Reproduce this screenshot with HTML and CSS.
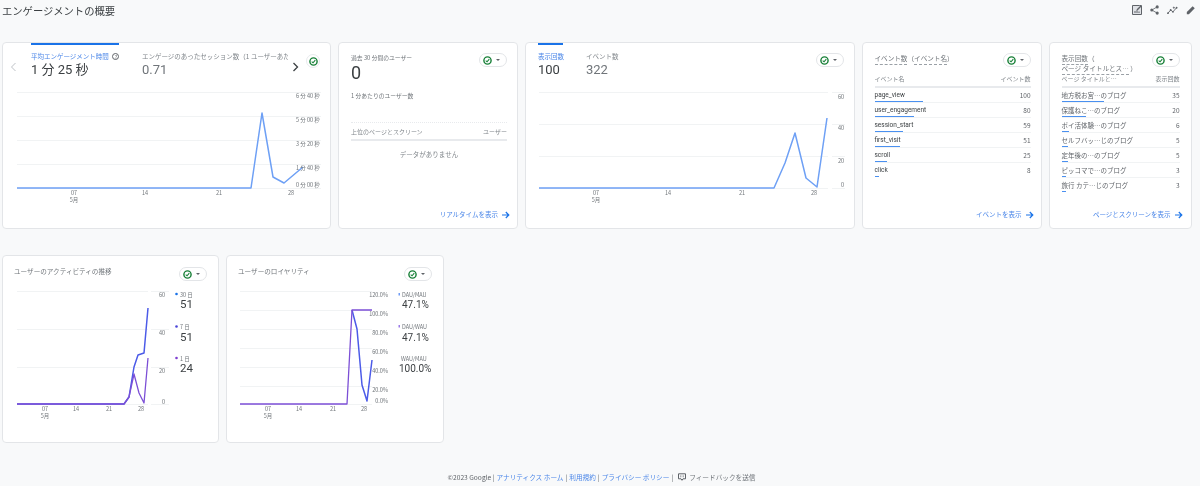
FILE: index.html
```html
<!DOCTYPE html>
<html lang="ja">
<head>
<meta charset="utf-8">
<title>エンゲージメントの概要</title>
<link rel="stylesheet" href="styles.css">
</head>
<body>
<header class="top">
  <h1 class="page-title">エンゲージメントの概要</h1>
  <div class="top-icons">
    <svg width="10" height="10" viewBox="0 0 10 10"><path d="M.5.500h7l2 0v9h-9z" fill="#dfe1e5" stroke="#5f6368"/><path d="M2.500 8V6h1v2zM4.500 8V4.500h1V8zM6.500 8V6.500h1V8z" fill="#5f6368"/><path d="M5 4l3.500-3.500 1 1L6 5H5z" fill="#5f6368"/></svg>
    <svg width="9" height="10" viewBox="0 0 11 12"><circle cx="8.800" cy="2.200" r="1.900" fill="#5f6368"/><circle cx="2.200" cy="6" r="1.900" fill="#5f6368"/><circle cx="8.800" cy="9.800" r="1.900" fill="#5f6368"/><path d="M8.800 2.200 2.200 6l6.600 3.800" fill="none" stroke="#5f6368"/></svg>
    <svg width="11" height="10" viewBox="0 0 12 11"><path d="M1 9l3-3.500 2.500 2L10.500 3" fill="none" stroke="#5f6368"/><circle cx="1" cy="9" r="1" fill="#5f6368"/><circle cx="4" cy="5.500" r="1" fill="#5f6368"/><circle cx="6.500" cy="7.500" r="1" fill="#5f6368"/><circle cx="10.500" cy="3" r="1" fill="#5f6368"/><path d="M7 2.500l.5-1 .5 1 1 .5-1 .5-.5 1-.5-1-1-.5z" fill="#5f6368"/></svg>
    <svg width="10" height="10" viewBox="0 0 12 12"><path d="M1 11V8.500L8 1.500 10.500 4 3.500 11z" fill="#5f6368"/></svg>
  </div>
</header>

<section class="row row-one">
  <article class="card card-first card-tabs">
    <div class="tab-bar">
      <svg class="chev chev-left" width="7" height="10" viewBox="0 0 7 10"><path d="M5.500 1 1.500 5l4 4" fill="none" stroke="#bdc1c6"/></svg>
      <div class="tab tab-active tab-time">
        <div class="tab-label">平均エンゲージメント時間 <span class="help">?</span></div>
        <div class="tab-value">1 分 25 秒</div>
      </div>
      <div class="tab tab-session">
        <div class="tab-label tab-clip">エンゲージのあったセッション数（1 ユーザーあたり）</div>
        <div class="tab-value tab-value-dim">0.71</div>
      </div>
      <svg class="chev" width="7" height="10" viewBox="0 0 7 10"><path d="M1.500 1l4 4-4 4" fill="none" stroke="#3c4043" stroke-width="1.300"/></svg>
      <span class="round-check">
        <svg width="10" height="10" viewBox="0 0 10 10"><circle cx="5" cy="5" r="4" fill="none" stroke="#188038" stroke-width="1.600"/><path d="M3 5.200l1.500 1.300L7 3.500" fill="none" stroke="#188038" stroke-width="1.200"/></svg>
      </span>
    </div>
    <svg class="chart" width="329" height="120" viewBox="2 88 329 120">
      <g class="grid"><path d="M16 92.500H320M16 116.500H320M16 140.500H320M16 164.500H320M16 188.500H320"/></g>
      <path class="line line-blue" d="M16 188H250L261 113 272 177 283 183 302 167"/>
      <g class="axis">
        <text x="295" y="98">6 分 40 秒</text><text x="295" y="122">5 分 00 秒</text><text x="295" y="146">3 分 20 秒</text><text x="295" y="170">1 分 40 秒</text><text x="295" y="187">0 分 00 秒</text>
        <text x="73" y="195" text-anchor="middle">07</text><text x="73" y="202" text-anchor="middle">5月</text><text x="144" y="195" text-anchor="middle">14</text><text x="218" y="195" text-anchor="middle">21</text><text x="290" y="195" text-anchor="middle">28</text>
      </g>
    </svg>
  </article>

  <article class="card card-narrow card-pad">
    <div class="card-head">
      <div>
        <div class="mini-label">過去 30 分間のユーザー</div>
        <div class="big-zero">0</div>
      </div>
      <span class="pill"><svg class="pill-icon" width="10" height="10" viewBox="0 0 10 10"><circle cx="5" cy="5" r="4" fill="none" stroke="#188038" stroke-width="1.600"/><path d="M3 5.200l1.500 1.300L7 3.500" fill="none" stroke="#188038" stroke-width="1.200"/></svg><span class="caret"></span></span>
    </div>
    <div class="mini-label per-minute">1 分あたりのユーザー数</div>
    <div class="dots"></div>
    <div class="table-head rt-head"><span>上位のページとスクリーン</span><span>ユーザー</span></div>
    <div class="no-data">データがありません</div>
    <a class="more" href="#">リアルタイムを表示<svg class="arrow" width="8" height="8" viewBox="0 0 8 8"><path d="M0 4h6.500M3.800 1l3 3-3 3" fill="none" stroke="#1a73e8" stroke-width="1.200"/></svg></a>
  </article>

  <article class="card card-wide card-tabs">
    <div class="tab-bar tab-bar-views">
      <div class="tab tab-active tab-views">
        <div class="tab-label">表示回数</div>
        <div class="tab-value tab-num">100</div>
      </div>
      <div class="tab tab-events">
        <div class="tab-label">イベント数</div>
        <div class="tab-value tab-num tab-value-dim">322</div>
      </div>
      <span class="pill pill-end"><svg class="pill-icon" width="10" height="10" viewBox="0 0 10 10"><circle cx="5" cy="5" r="4" fill="none" stroke="#188038" stroke-width="1.600"/><path d="M3 5.200l1.500 1.300L7 3.500" fill="none" stroke="#188038" stroke-width="1.200"/></svg><span class="caret"></span></span>
    </div>
    <svg class="chart" width="329" height="120" viewBox="526 88 329 120">
      <g class="grid"><path d="M539 92.500H828M832 92.500H845M539 124.500H828M832 124.500H845M539 156.500H828M832 156.500H845M539 188.500H828M832 188.500H845"/></g>
      <path class="line line-blue" d="M539 188H774L785 163 795 133 806 178 817 187 827 118"/>
      <g class="axis">
        <text x="838" y="99">60</text><text x="838" y="130">40</text><text x="838" y="163">20</text><text x="841" y="187">0</text>
        <text x="596" y="195" text-anchor="middle">07</text><text x="596" y="202" text-anchor="middle">5月</text><text x="668" y="195" text-anchor="middle">14</text><text x="742" y="195" text-anchor="middle">21</text><text x="814" y="195" text-anchor="middle">28</text>
      </g>
    </svg>
  </article>

  <article class="card card-narrow card-pad">
    <div class="card-head head-table">
      <div class="card-title"><span class="dashed">イベント数</span>（<span class="dashed">イベント名</span>）</div>
      <span class="pill"><svg class="pill-icon" width="10" height="10" viewBox="0 0 10 10"><circle cx="5" cy="5" r="4" fill="none" stroke="#188038" stroke-width="1.600"/><path d="M3 5.200l1.500 1.300L7 3.500" fill="none" stroke="#188038" stroke-width="1.200"/></svg><span class="caret"></span></span>
    </div>
    <div class="table-head"><span>イベント名</span><span>イベント数</span></div>
    <ul class="rows">
      <li class="data-row"><span class="row-text"><span class="mono">page_view</span><span>100</span></span><span class="bar" style="width:48px"></span></li>
      <li class="data-row"><span class="row-text"><span class="mono">user_engagement</span><span>80</span></span><span class="bar" style="width:39px"></span></li>
      <li class="data-row"><span class="row-text"><span class="mono">session_start</span><span>59</span></span><span class="bar" style="width:28px"></span></li>
      <li class="data-row"><span class="row-text"><span class="mono">first_visit</span><span>51</span></span><span class="bar" style="width:25px"></span></li>
      <li class="data-row"><span class="row-text"><span class="mono">scroll</span><span>25</span></span><span class="bar" style="width:12px"></span></li>
      <li class="data-row data-row-last"><span class="row-text"><span class="mono">click</span><span>8</span></span><span class="bar" style="width:4px"></span></li>
    </ul>
    <a class="more" href="#">イベントを表示<svg class="arrow" width="8" height="8" viewBox="0 0 8 8"><path d="M0 4h6.500M3.800 1l3 3-3 3" fill="none" stroke="#1a73e8" stroke-width="1.200"/></svg></a>
  </article>

  <article class="card card-small card-pad">
    <div class="card-head head-table">
      <div class="card-title"><span class="dashed">表示回数</span>（<br><span class="dashed">ページ タイトルとス…</span> ）</div>
      <span class="pill"><svg class="pill-icon" width="10" height="10" viewBox="0 0 10 10"><circle cx="5" cy="5" r="4" fill="none" stroke="#188038" stroke-width="1.600"/><path d="M3 5.200l1.500 1.300L7 3.500" fill="none" stroke="#188038" stroke-width="1.200"/></svg><span class="caret"></span></span>
    </div>
    <div class="table-head"><span>ページ タイトルと…</span><span>表示回数</span></div>
    <ul class="rows">
      <li class="data-row"><span class="row-text"><span>地方税お宮…のブログ</span><span>35</span></span><span class="bar" style="width:42px"></span></li>
      <li class="data-row"><span class="row-text"><span>保護ねこ…のブログ</span><span>20</span></span><span class="bar" style="width:24px"></span></li>
      <li class="data-row"><span class="row-text"><span>ポイ活体験…のブログ</span><span>6</span></span><span class="bar" style="width:7px"></span></li>
      <li class="data-row"><span class="row-text"><span>セルフバッ…じのブログ</span><span>5</span></span><span class="bar" style="width:6px"></span></li>
      <li class="data-row"><span class="row-text"><span>定年後の…のブログ</span><span>5</span></span><span class="bar" style="width:6px"></span></li>
      <li class="data-row"><span class="row-text"><span>ピッコマで…のブログ</span><span>3</span></span><span class="bar" style="width:4px"></span></li>
      <li class="data-row data-row-last"><span class="row-text"><span>旅行 カテ…じのブログ</span><span>3</span></span><span class="bar" style="width:4px"></span></li>
    </ul>
    <a class="more" href="#">ページとスクリーンを表示<svg class="arrow" width="8" height="8" viewBox="0 0 8 8"><path d="M0 4h6.500M3.800 1l3 3-3 3" fill="none" stroke="#1a73e8" stroke-width="1.200"/></svg></a>
  </article>
</section>

<section class="row row-two">
  <article class="card card-half">
    <div class="card-head head-half">
      <div class="card-title">ユーザーのアクティビティの推移</div>
      <span class="pill"><svg class="pill-icon" width="10" height="10" viewBox="0 0 10 10"><circle cx="5" cy="5" r="4" fill="none" stroke="#188038" stroke-width="1.600"/><path d="M3 5.200l1.500 1.300L7 3.500" fill="none" stroke="#188038" stroke-width="1.200"/></svg><span class="caret"></span></span>
    </div>
    <svg class="chart" width="217" height="135" viewBox="2 285 217 135">
      <g class="grid"><path d="M16 291.500H147M150 291.500H168M16 329.500H147M150 329.500H168M16 367.500H147M150 367.500H168M16 404.500H147M150 404.500H168"/></g>
      <path class="line line-indigo" d="M16 404H123L128 397 133 367 137 355 143 353 147 308"/>
      <path class="line line-purple" d="M16 404H123L128 397 133 374 138 393 143 403 147 358"/>
      <g class="axis">
        <text x="158" y="297">60</text><text x="158" y="335">40</text><text x="158" y="373">20</text><text x="161" y="404">0</text>
        <text x="44" y="411" text-anchor="middle">07</text><text x="44" y="418" text-anchor="middle">5月</text><text x="75" y="411" text-anchor="middle">14</text><text x="108" y="411" text-anchor="middle">21</text><text x="140" y="411" text-anchor="middle">28</text>
      </g>
      <circle cx="175.500" cy="294" r="1.300" fill="#1a73e8"/><circle cx="175.500" cy="326.500" r="1.300" fill="#4a45d8"/><circle cx="175.500" cy="358" r="1.300" fill="#7e3fd0"/>
      <g class="axis"><text x="179" y="297">30 日</text><text x="179" y="329">7 日</text><text x="179" y="361">1 日</text></g>
      <g class="legend-value"><text x="179" y="308">51</text><text x="179" y="341">51</text><text x="179" y="372">24</text></g>
    </svg>
  </article>

  <article class="card card-half card-half-last">
    <div class="card-head head-half">
      <div class="card-title">ユーザーのロイヤリティ</div>
      <span class="pill"><svg class="pill-icon" width="10" height="10" viewBox="0 0 10 10"><circle cx="5" cy="5" r="4" fill="none" stroke="#188038" stroke-width="1.600"/><path d="M3 5.200l1.500 1.300L7 3.500" fill="none" stroke="#188038" stroke-width="1.200"/></svg><span class="caret"></span></span>
    </div>
    <svg class="chart" width="217" height="135" viewBox="227 285 217 135">
      <g class="grid"><path d="M240 291.500H372M240 310.500H372M240 329.500H372M240 348.500H372M240 367.500H372M240 386.500H372M240 404.500H372"/></g>
      <path class="line line-indigo" d="M352 310 357 329 362 385 367 401 372 360"/>
      <path class="line line-purple" d="M240 404H347L352 310H372"/>
      <g class="axis">
        <text x="388" y="297" text-anchor="end">120.0%</text><text x="388" y="316" text-anchor="end">100.0%</text><text x="388" y="335" text-anchor="end">80.0%</text><text x="388" y="354" text-anchor="end">60.0%</text><text x="388" y="373" text-anchor="end">40.0%</text><text x="388" y="392" text-anchor="end">20.0%</text><text x="388" y="403" text-anchor="end">0.0%</text>
        <text x="268" y="411" text-anchor="middle">07</text><text x="268" y="418" text-anchor="middle">5月</text><text x="299" y="411" text-anchor="middle">14</text><text x="333" y="411" text-anchor="middle">21</text><text x="364" y="411" text-anchor="middle">28</text>
      </g>
      <rect x="398.500" y="293" width="1.500" height="2.500" fill="#6f9cf5"/><rect x="398.500" y="325" width="1.500" height="2.500" fill="#9b7be8"/>
      <g class="axis"><text x="402" y="297">DAU/MAU</text><text x="402" y="329">DAU/WAU</text><text x="401" y="361">WAU/MAU</text></g>
      <g class="legend-value legend-pct"><text x="402" y="308">47.1%</text><text x="402" y="341">47.1%</text><text x="399" y="372">100.0%</text></g>
    </svg>
  </article>
</section>

<footer class="foot">
  <span>©2023 Google |</span>
  <a href="#">アナリティクス ホーム</a><span>|</span>
  <a href="#">利用規約</a><span>|</span>
  <a href="#">プライバシー ポリシー</a><span>|</span>
  <svg class="foot-icon" width="8" height="8" viewBox="0 0 8 8"><path d="M.5.800h7v5h-2.500L4 7.300 3 5.800H.5z" fill="none" stroke="#5f6368"/><path d="M2.800 2.300v2M5.200 2.300v2" stroke="#5f6368" fill="none" stroke-width=".7"/></svg>
  <span class="foot-send">フィードバックを送信</span>
</footer>
</body>
</html>
```
FILE: styles.css
```css
* { box-sizing: border-box; }
html, body { margin: 0; height: 486px; overflow: hidden; }
body {
  background: #f8f9fa;
  color: #5f6368;
  font-family: "Noto Sans CJK JP", "Noto Sans", sans-serif;
  display: flex;
  flex-direction: column;
  filter: blur(0.3px);
}
a { color: #4a86e8; text-decoration: none; }

.top { height: 42px; flex: none; display: flex; justify-content: space-between; padding: 4px 4px 0 2px; }
.page-title { margin: 0; font-size: 10.3px; line-height: 14px; font-weight: 400; color: #3c4043; }
.top-icons { display: flex; gap: 8px; padding-top: 1px; height: 14px; align-items: flex-start; }

.row { display: flex; gap: 7px; padding-left: 2px; flex: none; }
.row-two { margin-top: 26px; }

.card { background: #fff; border: 1px solid #e3e5e8; border-radius: 4px; position: relative; overflow: hidden; }
.card-first { width: 329px; height: 187px; }
.card-wide { width: 329.500px; height: 187px; }
.card-narrow { width: 180px; height: 187px; }
.card-small { width: 143px; height: 187px; }
.card-half { width: 217px; height: 188px; }
.card-half-last { width: 218px; }
.card-pad { padding: 0 10px 0 12px; display: flex; flex-direction: column; }
.card-small.card-pad { padding-right: 11px; }

.tab-bar { display: flex; height: 45px; align-items: flex-start; }
.chev { margin-top: 19px; flex: none; }
.chev-left { margin-left: 7px; margin-right: 14px; }
.tab { flex: none; height: 45px; padding-top: 6px; }
.tab-active { border-top: 2px solid #1a73e8; }
.tab:not(.tab-active) { padding-top: 8px; }
.tab-time { width: 88px; margin-right: 23px; }
.tab-session { width: 146px; overflow: hidden; margin-right: 4px; }
.tab-label { font-size: 6.500px; line-height: 10px; white-space: nowrap; color: #80868b; }
.tab-active .tab-label { color: #4a86e8; }
.tab-clip { overflow: hidden; }
.help { display: inline-block; width: 7px; height: 7px; margin-left: 2px; border: 1px solid #5f6368; border-radius: 50%; font-size: 5px; line-height: 5px; text-align: center; color: #5f6368; vertical-align: 0; }
.tab-value { font-size: 13px; line-height: 18px; color: #3c4043; white-space: nowrap; font-family: "Roboto", "Noto Sans CJK JP", sans-serif; }
.tab-value-dim { color: #70757a; }
.tab-num { font-size: 13px; }
.tab-bar-views { padding-left: 12px; }
.tab-views { width: 25px; margin-right: 23px; overflow: visible; }
.tab-events { width: 50px; }
.round-check { margin-left: 7px; margin-top: 11px; width: 14px; height: 14px; border-radius: 50%; border: 1px solid #e8eaed; display: flex; align-items: center; justify-content: center; flex: none; }
.round-check svg { width: 9px; height: 9px; }

.pill { flex: none; width: 28px; height: 14px; border: 1px solid #e3e5e8; border-radius: 7px; display: flex; align-items: center; gap: 4px; padding-left: 3px; background: #fff; }
.pill-icon { flex: none; width: 9px; height: 9px; }
.caret { width: 0; height: 0; border-left: 2.500px solid transparent; border-right: 2.500px solid transparent; border-top: 2.500px solid #5f6368; }
.pill-end { margin-left: auto; margin-top: 10px; margin-right: 10px; }

.chart { display: block; }
.grid path { stroke: #f1f3f4; stroke-width: 1; fill: none; }
.line { fill: none; stroke-width: 1.500; stroke-linejoin: round; }
.line-blue { stroke: #6ea0f5; }
.line-indigo { stroke: #4c5be8; stroke-width: 1.500; }
.line-purple { stroke: #7c4fd6; stroke-width: 1.300; }
.axis text { font-size: 5.500px; fill: #70757a; font-family: "Noto Sans CJK JP", sans-serif; }
.legend-value text { font-size: 11.500px; fill: #3c4043; font-family: "Roboto", sans-serif; }
.legend-pct text { font-size: 10px; }

.card-head { display: flex; justify-content: space-between; align-items: flex-start; flex: none; }
.card-pad > .card-head { padding-top: 10px; }
.mini-label { font-size: 5.800px; line-height: 9px; color: #70757a; white-space: nowrap; }
.big-zero { font-size: 18px; line-height: 20px; color: #3c4043; font-family: "Roboto", sans-serif; margin-top: 1px; }
.per-minute { margin-top: 8px; }
.dots { margin-top: 22px; border-top: 1px dotted #e8eaed; }
.table-head { display: flex; justify-content: space-between; font-size: 6px; line-height: 10px; color: #80868b; border-bottom: 2px solid #e8eaed; padding: 0 0 2px; white-space: nowrap; flex: none; }
.rt-head { margin-top: 4px; }
.no-data { text-align: center; font-size: 6.500px; line-height: 12px; margin-top: 7px; color: #80868b; }

.head-table { height: 30px; }
.card-title { font-size: 6.600px; line-height: 10px; color: #70757a; white-space: nowrap; }
.dashed { border-bottom: 1px dashed #9aa0a6; padding-bottom: 1px; }
.head-table + .table-head { margin-top: 1px; }

.rows { list-style: none; margin: 0; padding: 0; }
.data-row { height: 15px; border-bottom: 1px solid #f1f3f4; display: flex; flex-direction: column; justify-content: flex-end; }
.data-row-last { border-bottom-color: transparent; }
.row-text { display: flex; justify-content: space-between; font-size: 6.500px; line-height: 9px; color: #5f6368; white-space: nowrap; }
.mono { color: #3c4043; font-family: "Roboto", sans-serif; }
.bar { display: block; height: 1.500px; background: #4a90f0; flex: none; margin-top: 1px; }

.more { margin-top: auto; margin-bottom: 8px; align-self: flex-end; font-size: 6.500px; line-height: 11px; white-space: nowrap; display: flex; align-items: center; gap: 4px; margin-right: -3px; }
.arrow { flex: none; }

.head-half { padding: 11px 11px 0 11px; height: 29px; }
.head-half .card-title { margin-top: -1px; }

.foot { margin-top: 28px; display: flex; justify-content: center; align-items: center; gap: 2px; font-size: 6.650px; line-height: 12px; padding-left: 3px; white-space: nowrap; }
.foot-icon { margin-left: 3px; margin-right: 1px; }
.foot-send { color: #70757a; }
```
